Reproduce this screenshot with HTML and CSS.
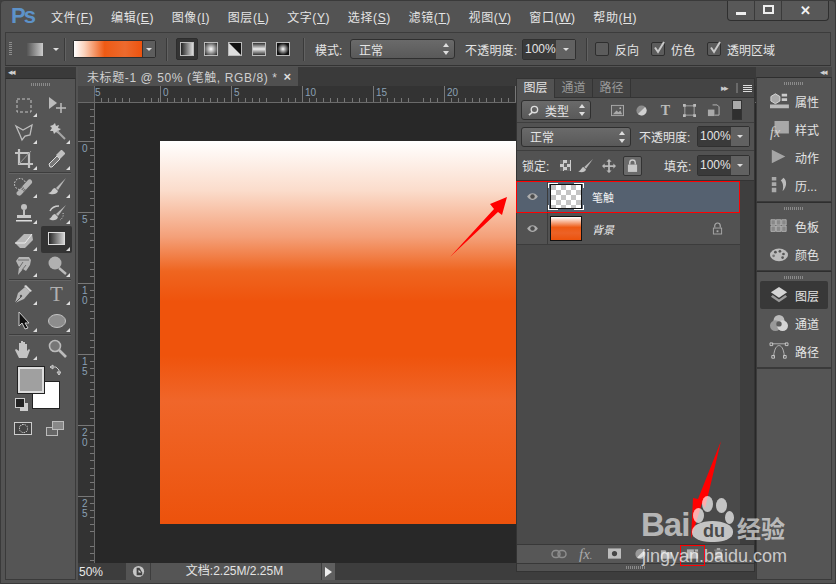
FILE: index.html
```html
<!DOCTYPE html>
<html lang="zh">
<head>
<meta charset="utf-8">
<title>Photoshop</title>
<link rel="stylesheet" href="styles.css">
</head>
<body>
<div class="app">
  <header class="menubar">
    <div class="logo">Ps</div>
    <nav class="menu">
      <span>文件(<u>F</u>)</span><span>编辑(<u>E</u>)</span><span>图像(<u>I</u>)</span><span>图层(<u>L</u>)</span><span>文字(<u>Y</u>)</span><span>选择(<u>S</u>)</span><span>滤镜(<u>T</u>)</span><span>视图(<u>V</u>)</span><span>窗口(<u>W</u>)</span><span>帮助(<u>H</u>)</span>
    </nav>
    <div class="winctl">
      <div class="winbtn w-min"><i class="ic-min"></i></div>
      <div class="winbtn w-max"><i class="ic-max"></i></div>
      <div class="winbtn w-close">✕</div>
    </div>
  </header>

  <section class="options">
    <div class="grip-v"></div>
    <div class="preset"></div>
    <div class="caret preset-caret"></div>
    <div class="sep sep-a"></div>
    <div class="gradbox"><div class="gradfill"></div><div class="graddrop"><div class="caret"></div></div></div>
    <div class="sep sep-b"></div>
    <div class="gtypes">
      <div class="gtype on"><i class="g g-linear"></i></div>
      <div class="gtype"><i class="g g-radial"></i></div>
      <div class="gtype"><i class="g g-angle"></i></div>
      <div class="gtype"><i class="g g-reflect"></i></div>
      <div class="gtype"><i class="g g-diamond"></i></div>
    </div>
    <div class="sep sep-c"></div>
    <span class="lbl mode-l">模式:</span>
    <div class="select mode-s"><span>正常</span><b class="updown"></b></div>
    <span class="lbl op-l">不透明度:</span>
    <div class="combo op-c"><span>100%</span><div class="combo-drop"><div class="caret"></div></div></div>
    <div class="sep sep-d"></div>
    <div class="check"></div><span class="lbl chk-l">反向</span>
    <div class="check on"><svg viewBox="0 0 14 14"><path d="M3 6.5 6 11 12 1" fill="none" stroke="#c8c8c8" stroke-width="2"/></svg></div><span class="lbl chk-l">仿色</span>
    <div class="check on"><svg viewBox="0 0 14 14"><path d="M3 6.5 6 11 12 1" fill="none" stroke="#c8c8c8" stroke-width="2"/></svg></div><span class="lbl chk-l">透明区域</span>
  </section>

  <main class="body">
    <aside class="leftcol">
      <div class="collapse-strip"><span class="dbl">◂◂</span></div>
      <div class="toolbar">
        <div class="grip-h"></div>
        <div class="tools">
          <div class="tool more"><svg viewBox="0 0 20 20"><rect x="3" y="3" width="14" height="13" fill="none" stroke="#c4c4c4" stroke-dasharray="3 2"/></svg></div>
          <div class="tool"><svg viewBox="0 0 20 20"><path d="M2 1v12l8-6z" fill="#bcbcbc"/><path d="M14 7v10M9 12h10" stroke="#bcbcbc" stroke-width="1.5"/></svg></div>
          <div class="tool more"><svg viewBox="0 0 20 20"><path d="M2 4l7 4 9-5-2 10-5 1-3 4-2-5z" fill="none" stroke="#bcbcbc" stroke-width="1.3"/></svg></div>
          <div class="tool more"><svg viewBox="0 0 20 20"><path d="M8 1l1 3 3-1-1 3 3 1-3 2 1 3-3-2-2 2-1-3-3 0 2-3-2-2 3-1z" fill="#c8c8c8"/><path d="M10 9l8 8" stroke="#a8a8a8" stroke-width="2"/></svg></div>
          <div class="tool more"><svg viewBox="0 0 20 20"><path d="M5 0v15h14M1 4h14v15" fill="none" stroke="#c4c4c4" stroke-width="2.2"/><path d="M5 15 17 2" stroke="#999"/></svg></div>
          <div class="tool more"><svg viewBox="0 0 20 20"><path d="M3 18l-1-3 8-8 3 3-8 8z" fill="#777" stroke="#ddd"/><path d="M9 6l5-5 1 0 3 3 0 1-5 5z" fill="#c0c0c0"/></svg></div>
          <div class="divider"></div>
          <div class="tool more"><svg viewBox="0 0 20 20"><circle cx="6" cy="7" r="5.500" fill="none" stroke="#ddd" stroke-dasharray="1.500 1.500"/><path d="M3 15 14 3c2-2 5 1 4 3L7 18c-2 2-6-1-4-3z" fill="#b4b4b4"/><path d="M7 10l4 4" stroke="#666" stroke-width="3" stroke-dasharray="1 1"/></svg></div>
          <div class="tool more"><svg viewBox="0 0 20 20"><path d="M19 1 9 11l2 2z" fill="#b8b8b8"/><path d="M8 11c-3 0-3 5-7 5 3 2 9 2 10-2z" fill="#c8c8c8"/></svg></div>
          <div class="tool more"><svg viewBox="0 0 20 20"><circle cx="10" cy="4" r="3" fill="#c0c0c0"/><path d="M9 7h2v5H9z" fill="#c0c0c0"/><path d="M3 12h14v3H3z" fill="#c8c8c8"/><path d="M2 17h16v1.5H2z" fill="#ddd"/></svg></div>
          <div class="tool more"><svg viewBox="0 0 20 20"><path d="M19 2 9 11l2 2z" fill="#b8b8b8"/><path d="M8 11c-3 0-3 4-6 5 3 2 8 2 9-2z" fill="#c8c8c8"/><path d="M3 8c2-4 5-5 9-5" fill="none" stroke="#ccc" stroke-width="1.5"/><path d="M16 10c1 3-1 6-3 7" fill="none" stroke="#ccc" stroke-dasharray="1 1.5"/></svg></div>
          <div class="tool more"><svg viewBox="0 0 20 20"><path d="M1 13l5 5h5l8-8-1-6-8 0z" fill="#b8b8b8"/><path d="M1 13h10l7-9" fill="none" stroke="#ececec"/></svg></div>
          <div class="tool more on"><svg viewBox="0 0 20 20"><defs><linearGradient id="tg"><stop offset="0" stop-color="#222"/><stop offset="1" stop-color="#d8d8d8"/></linearGradient></defs><rect x="1.5" y="2.500" width="16" height="12" fill="url(#tg)" stroke="#ddd"/></svg></div>
          <div class="tool more"><svg viewBox="0 0 20 20"><path d="M4 19 5 11 2 5 5 1h10l2 3-1 5-4 6-3-2z" fill="#b5b5b5"/><path d="M4 4h11M8 14l4-5M5 12l4-6" stroke="#6d6d6d"/></svg></div>
          <div class="tool more"><svg viewBox="0 0 20 20"><circle cx="8" cy="7" r="6.500" fill="#b0b0b0"/><path d="M12 12l7 6" stroke="#bbb" stroke-width="2.400"/></svg></div>
          <div class="divider"></div>
          <div class="tool more"><svg viewBox="0 0 20 20"><path d="M1 19 4 9l7-6 5 5-6 7z" fill="#b8b8b8"/><path d="M1 19l6-6" stroke="#555"/><path d="M12 1l6 6-2 1-6-6z" fill="#d4d4d4"/><circle cx="7" cy="12" r="1.200" fill="#555"/></svg></div>
          <div class="tool more"><span class="tool-t">T</span></div>
          <div class="tool more"><svg viewBox="0 0 20 20"><path d="M5 1v14l3-3 3 6 3-1-3-5h4z" fill="#111" stroke="#ccc"/></svg></div>
          <div class="tool more"><svg viewBox="0 0 20 20"><ellipse cx="10" cy="10" rx="8.500" ry="6.500" fill="#8d8d8d" stroke="#c4c4c4"/></svg></div>
          <div class="divider"></div>
          <div class="tool more"><svg viewBox="0 0 20 20"><path d="M5 19 1 11l1-1 3 2V4h2v5-7h2v7V3h2v7V5h2v7l2-2 1 1-3 8z" fill="#c4c4c4"/></svg></div>
          <div class="tool"><svg viewBox="0 0 20 20"><circle cx="8" cy="7" r="5.500" fill="#777" stroke="#bbb" stroke-width="1.600"/><path d="M12 11l7 7" stroke="#bbb" stroke-width="2.600"/></svg></div>
        </div>
        <div class="colors">
          <div class="swatch-bg"></div>
          <div class="swatch-fg"></div>
          <svg class="swap" viewBox="0 0 12 12"><path d="M1 3h6l3 3v5M1 3l3-2v4zM10 11l-2-3h4z" fill="none" stroke="#ccc"/></svg>
          <div class="defaults"><i class="d-b"></i><i class="d-f"></i></div>
        </div>
        <div class="modes">
          <div class="mask"><i></i></div>
          <div class="screen"><i class="s1"></i><i class="s2"></i></div>
        </div>
      </div>
    </aside>

    <section class="doc">
      <div class="tabstrip">
        <div class="tab"><span>未标题-1 @ 50% (笔触, RGB/8) *</span><b>×</b></div>
      </div>
      <div class="docbody">
        <div class="hruler">
          <div class="corner"></div>
          <div class="hcell first">5</div><div class="hcell">0</div><div class="hcell">5</div><div class="hcell">10</div><div class="hcell">15</div><div class="hcell">20</div><div class="hcell"></div><div class="hcell"></div>
        </div>
        <div class="docmain">
          <div class="vruler">
            <div class="vcell first"></div><div class="vcell">0</div><div class="vcell">5</div><div class="vcell">1<br>0</div><div class="vcell">1<br>5</div><div class="vcell">2<br>0</div><div class="vcell">2<br>5</div>
          </div>
          <div class="workspace"><div class="artboard"></div></div>
        </div>
        <div class="status">
          <span class="zoomv">50%</span>
          <div class="st-btn"><svg viewBox="0 0 14 14"><circle cx="7" cy="7" r="6" fill="#c8c8c8"/><path d="M5 3h3l3 5v3H5z" fill="#444"/><path d="M7 5l3 3H7z" fill="#ddd"/></svg></div>
          <div class="st-info">文档:2.25M/2.25M</div>
          <div class="st-arrow"><i></i></div>
        </div>
      </div>
    </section>

    <aside class="dock">
      <div class="collapse-strip right"><span class="dbl">◂◂</span></div>
      <div class="dockgroup">
        <div class="grip-h"></div>
        <div class="dockrow"><svg viewBox="0 0 22 20"><path d="M2 5l5-3 5 3v5l-5 3-5-3z" fill="#aaa" stroke="#ddd"/><path d="M14 2h6v3h-6zM14 7h6v3h-6z" fill="#ccc"/><path d="M1 14h21v4H1z" fill="#bbb"/></svg><span>属性</span></div>
        <div class="dockrow"><svg viewBox="0 0 22 20"><path d="M6 1h16v14H6z" fill="#a8a8a8"/></svg><em class="fx">fx</em><span>样式</span></div>
        <div class="dockrow"><svg viewBox="0 0 22 20"><path d="M3 2v15l15-7.500z" fill="#a5a5a5"/></svg><span>动作</span></div>
        <div class="dockrow"><svg viewBox="0 0 22 20"><path d="M3 1h5v4H3zM3 7h5v4H3zM3 13h5v5H3z" fill="#aaa"/><path d="M16 2c4 3 4 10-1 15 1-5 1-9-2-12z" fill="#bbb"/></svg><span>历...</span></div>
      </div>
      <div class="dockgroup">
        <div class="grip-h"></div>
        <div class="dockrow"><svg viewBox="0 0 22 20"><path d="M2 3h5v6H2zM8 3h5v6H8zM14 3h5v6h-5zM2 10h5v6H2zM8 10h5v6H8zM14 10h5v6h-5z" fill="#888" stroke="#ccc" stroke-width=".7"/></svg><span>色板</span></div>
        <div class="dockrow"><svg viewBox="0 0 22 20"><ellipse cx="11" cy="11" rx="10" ry="7" fill="#bcbcbc"/><circle cx="7" cy="8" r="1.500" fill="#555"/><circle cx="12" cy="7" r="1.500" fill="#555"/><circle cx="16" cy="10" r="1.500" fill="#555"/><circle cx="15" cy="14" r="1.500" fill="#555"/><circle cx="5" cy="12" r="1.500" fill="#777"/></svg><span>颜色</span></div>
      </div>
      <div class="dockgroup">
        <div class="grip-h"></div>
        <div class="dockrow active"><svg viewBox="0 0 22 20"><path d="M11 1l9 6-9 6-9-6z" fill="#d4d4d4"/><path d="M4 10l-2 2 9 6 9-6-2-2-7 5z" fill="#9a9a9a"/></svg><span>图层</span></div>
        <div class="dockrow"><svg viewBox="0 0 22 20"><circle cx="11" cy="7" r="6" fill="#bbb"/><circle cx="7" cy="13" r="6" fill="#999"/><circle cx="15" cy="13" r="6" fill="#d4d4d4"/><circle cx="11" cy="11" r="3" fill="#5c5c5c"/></svg><span>通道</span></div>
        <div class="dockrow"><svg viewBox="0 0 22 20"><path d="M5 16C6 6 9 4 11 4s5 2 6 12M3 2h16" fill="none" stroke="#bbb"/><path d="M1 1h3v3H1zM18 1h3v3h-3zM3 15h3v3H3zM16 15h3v3h-3z" fill="none" stroke="#ccc"/></svg><span>路径</span></div>
      </div>
      <div class="dockfill"></div>
    </aside>
  </main>

  <section class="layers">
    <div class="lp-tabs">
      <div class="lp-tab on">图层</div><div class="lp-tab">通道</div><div class="lp-tab">路径</div>
      <div class="lp-right"><span class="dbl small">▸▸</span><i class="lp-bar"></i><i class="lp-menu"></i></div>
    </div>
    <div class="lp-filter">
      <div class="select filter-s"><svg viewBox="0 0 12 12"><circle cx="7" cy="5" r="3.500" fill="none" stroke="#ddd" stroke-width="1.500"/><path d="M4.500 8 1 11" stroke="#ddd" stroke-width="1.800"/></svg><span>类型</span><b class="updown"></b></div>
      <div class="f-icons">
        <svg viewBox="0 0 14 14"><rect x=".5" y="1.500" width="13" height="11" fill="#5a5a5a" stroke="#aaa"/><path d="M2 11l4-4 2 2 2-2 2 4z" fill="#aaa"/><circle cx="10" cy="4.500" r="1" fill="#bbb"/></svg>
        <svg viewBox="0 0 14 14"><circle cx="7" cy="7" r="5.500" fill="#8c8c8c"/><path d="M10.900 3.100A5.500 5.500 0 0 1 3.100 10.900z" fill="#d0d0d0"/></svg>
        <span class="f-t">T</span>
        <svg viewBox="0 0 14 14"><path d="M2 2h10v10H2z" fill="none" stroke="#aaa"/><path d="M0 0h3v3H0zM11 0h3v3h-3zM0 11h3v3H0zM11 11h3v3h-3z" fill="#bbb"/></svg>
        <svg viewBox="0 0 14 14"><path d="M6 1h5l2 2v9H8" fill="none" stroke="#bbb"/><rect x="1" y="6" width="7" height="7" fill="#aaa"/></svg>
      </div>
      <div class="f-toggle"><i></i></div>
    </div>
    <div class="lp-blend">
      <div class="select blend-s"><span>正常</span><b class="updown"></b></div>
      <span class="lbl lp-op">不透明度:</span>
      <div class="combo lp-c"><span>100%</span><div class="combo-drop"><div class="caret"></div></div></div>
    </div>
    <div class="lp-lock">
      <span class="lbl lock-l">锁定:</span>
      <i class="lk-check"></i>
      <svg class="lk" viewBox="0 0 18 16"><path d="M17 0 7 9l2 2z" fill="#b8b8b8"/><path d="M6 9c-2 0-2 4-6 5 4 2 8 1 9-2z" fill="#c4c4c4"/></svg>
      <svg class="lk" viewBox="0 0 16 16"><path d="M8 0l3 3H9v4h4V5l3 3-3 3V9H9v4h2l-3 3-3-3h2V9H3v2L0 8l3-3v2h4V3H5z" fill="#b8b8b8"/></svg>
      <div class="lk-on"><svg viewBox="0 0 12 14"><path d="M3 6V4a3 3 0 0 1 6 0v2" fill="none" stroke="#ccc" stroke-width="1.500"/><rect x="1" y="6" width="10" height="8" fill="#c8c8c8"/></svg></div>
      <span class="lbl fill-l">填充:</span>
      <div class="combo lp-c"><span>100%</span><div class="combo-drop"><div class="caret"></div></div></div>
    </div>
    <div class="lp-mid">
      <div class="lp-list">
        <div class="layer sel">
          <div class="eye"><svg viewBox="0 0 14 10"><path d="M1 5c3-5 9-5 12 0-3 5-9 5-12 0z" fill="#adadad"/><circle cx="7" cy="5" r="2.500" fill="#4c4c4c"/></svg></div>
          <div class="thumbwrap"><div class="thumb check-bg"></div></div>
          <span class="lname">笔触</span>
        </div>
        <div class="layer">
          <div class="eye"><svg viewBox="0 0 14 10"><path d="M1 5c3-5 9-5 12 0-3 5-9 5-12 0z" fill="#adadad"/><circle cx="7" cy="5" r="2.500" fill="#4c4c4c"/></svg></div>
          <div class="thumbwrap"><div class="thumb grad-bg"></div></div>
          <span class="lname it">背景</span>
          <svg class="llock" viewBox="0 0 12 14"><path d="M3 6V4a3 3 0 0 1 6 0v2" fill="none" stroke="#aaa" stroke-width="1.300"/><rect x="1.500" y="6.500" width="9" height="6.500" fill="none" stroke="#aaa"/><rect x="5" y="9" width="2" height="2" fill="#aaa"/></svg>
        </div>
      </div>
      <div class="lp-scroll"></div>
    </div>
    <div class="lp-foot">
      <svg class="fi-link" viewBox="0 0 16 10"><rect x="1" y="1.500" width="8" height="7" rx="3.500" fill="none" stroke="#8d8d8d" stroke-width="1.500"/><rect x="7" y="1.500" width="8" height="7" rx="3.500" fill="none" stroke="#8d8d8d" stroke-width="1.500"/></svg>
      <em class="fi-fx">fx<small>.</small></em>
      <svg class="fi" viewBox="0 0 14 12"><rect width="14" height="11" fill="#bdbdbd"/><circle cx="7" cy="5.500" r="2.800" fill="#444"/></svg>
      <svg class="fi" viewBox="0 0 14 14"><circle cx="7" cy="7" r="6" fill="#999"/><path d="M11 3A6 6 0 0 1 3 11z" fill="#ddd"/></svg>
      <svg class="fi" viewBox="0 0 14 12"><path d="M1 2h5l1 2h6v7H1z" fill="#b0b0b0"/></svg>
      <svg class="fi" viewBox="0 0 14 12"><path d="M1 1h12v10H1z" fill="#b0b0b0"/><path d="M9 1v3h4" fill="none" stroke="#555"/></svg>
      <svg class="fi" viewBox="0 0 14 14"><path d="M3 4h8v9H3zM2 2h10v1H2zM5 0h4v2H5z" fill="#a5a5a5"/></svg>
    </div>
    <div class="lp-resize"><div class="grip-h"></div></div>
  </section>

  <svg class="annot" viewBox="0 0 836 584">
    <path d="M450 257 494 209 490 204 507 197 502 215 498 212z" fill="#ff0000"/>
    <path d="M721 441 705 508 702 503 691 539 693 498 698 499z" fill="#ff0000"/>
  </svg>
  <div class="redbox rb-layer"></div>
  <div class="redbox rb-foot"></div>

  <div class="watermark">
    <div class="wm-top">
      <span class="wm-bai">Bai</span>
      <div class="wm-paw">
        <i class="t1"></i><i class="t2"></i><i class="t3"></i><i class="t4"></i><i class="palm"></i>
        <b>du</b>
      </div>
      <span class="wm-jy">经验</span>
    </div>
    <div class="wm-url">jingyan.baidu.com</div>
  </div>
</div>
</body>
</html>
```

FILE: styles.css
```css
* { box-sizing: border-box; }
html, body { margin: 0; padding: 0; }
body { width: 836px; height: 584px; overflow: hidden; background: #3e3e3e; font-family: "Liberation Sans", "Noto Sans CJK SC", sans-serif; font-size: 12px; color: #e4e4e4; }
i, b, em { display: block; font-style: normal; }
svg { display: block; }
.app { position: relative; width: 836px; height: 584px; display: flex; flex-direction: column; background: #535353; border: 1px solid #3a3a3a; border-radius: 4px 4px 0 0; overflow: hidden; }

/* menu */
.menubar { height: 31px; flex: none; display: flex; align-items: center; padding-left: 10px; position: relative; }
.logo { width: 40px; color: #5d92c9; font-size: 22px; font-weight: bold; line-height: 30px; margin-top: -2px; letter-spacing: -2px; }
.menu { display: flex; gap: 17.700px; font-size: 12px; letter-spacing: .6px; }
.menu span { white-space: nowrap; }
.winctl { position: absolute; top: -1px; right: 6px; height: 21px; width: 102px; display: flex; border: 1px solid #2f2f2f; border-top: 0; border-radius: 0 0 4px 4px; background: #585858; }
.winbtn { height: 100%; display: flex; align-items: center; justify-content: center; border-right: 1px solid #3a3a3a; }
.w-min { width: 27px; } .w-max { width: 27px; }
.w-close { flex: 1; border: 0; color: #f2f2f2; font-size: 13px; font-weight: bold; }
.ic-min { width: 10px; height: 3px; background: #eee; margin-top: 7px; }
.ic-max { width: 11px; height: 9px; border: 2px solid #eee; margin-top: -2px; }

/* options */
.options { height: 34px; flex: none; margin: 0 4px; display: flex; align-items: center; border: 1px solid #3c3c3c; border-bottom-color: #333; background: #515151; position: relative; }
.grip-v { width: 3px; height: 14px; margin-left: 3px; background: repeating-linear-gradient(#8d8d8d 0 1px, transparent 1px 2px); }
.preset { width: 16px; height: 13px; margin-left: 15px; background: linear-gradient(90deg, #555, #ccc); }
.caret { width: 0; height: 0; border: 3px solid transparent; border-top: 3px solid #ddd; border-bottom: 0; border-left-width: 3px; }
.preset-caret { margin-left: 10px; }
.sep { width: 1px; height: 23px; background: #3a3a3a; box-shadow: 1px 0 #626262; }
.sep-a { margin-left: 5px; }
.gradbox { width: 83px; height: 18px; margin-left: 8px; display: flex; border: 1px solid #2e2e2e; border-radius: 2px; }
.gradfill { width: 68px; background: linear-gradient(90deg, #fff 0%, #fbd3bd 15%, #ee5a14 45%, #ec6a2e 75%, #ee530e 100%); }
.graddrop { flex: 1; background: #5d5d5d; display: flex; align-items: center; justify-content: center; border-left: 1px solid #333; }
.sep-b { margin-left: 10px; }
.gtypes { display: flex; margin-left: 9px; }
.gtype { width: 22px; height: 22px; margin-right: 2px; display: flex; align-items: center; justify-content: center; border-radius: 2px; }
.gtype.on { background: #343434; border: 1px solid #2d2d2d; }
.g { width: 12px; height: 12px; box-shadow: 0 0 0 1px #bbb; }
.g-linear { background: linear-gradient(90deg, #222, #ddd); }
.g-radial { background: radial-gradient(circle, #fff 0, #222 100%); }
.g-angle { background: linear-gradient(45deg, #ddd 49%, #111 51%); }
.g-reflect { background: linear-gradient(#333, #eee 50%, #333); }
.g-diamond { background: radial-gradient(circle, #fff 0, #111 70%); }
.sep-c { margin-left: 7px; }
.lbl { white-space: nowrap; }
.mode-l { margin-left: 11px; width: 35px; }
.select { height: 20px; display: flex; align-items: center; padding-left: 8px; border: 1px solid #2f2f2f; border-radius: 3px; background: linear-gradient(#6a6a6a, #595959); position: relative; }
.updown { position: absolute; right: 5px; top: 4px; width: 6px; height: 10px; }
.updown::before, .updown::after { content: ""; position: absolute; left: 0; border: 3px solid transparent; }
.updown::before { top: -1px; border-top: 0; border-bottom: 4px solid #ddd; }
.updown::after { bottom: -1px; border-bottom: 0; border-top: 4px solid #ddd; }
.mode-s { width: 105px; }
.op-l { margin-left: 10px; width: 57px; letter-spacing: .2px; }
.combo { display: flex; height: 21px; width: 54px; border: 1px solid #303030; border-radius: 2px; }
.combo span { width: 33px; background: #3a3a3a; line-height: 19px; padding-left: 2px; }
.combo-drop { flex: 1; background: #616161; display: flex; align-items: center; justify-content: center; }
.sep-d { margin-left: 10px; }
.check { width: 14px; height: 14px; border: 1px solid #2e2e2e; border-radius: 2px; background: #5c5c5c; margin-left: 8px; }
.check.on svg { width: 14px; height: 14px; margin: -2px 0 0 0; }
.check.on { margin-left: 12px; }
.chk-l { margin-left: 6px; }

/* body grid */
.body { flex: 1; min-height: 0; display: flex; padding: 1px 3px 3px 4px; }
.leftcol { width: 71px; flex: none; display: flex; flex-direction: column; }
.collapse-strip { height: 11px; flex: none; background: #3a3a3a; color: #cfcfcf; font-size: 9px; line-height: 11px; padding-left: 3px; letter-spacing: -2px; }
.collapse-strip.right { height: 10px; text-align: right; padding-right: 6px; background: #474747; }
.dbl { display: inline-block; }
.toolbar { flex: 1; background: #555; border: 1px solid #3a3a3a; border-top-color: #2e2e2e; display: flex; flex-direction: column; }
.grip-h { width: 20px; height: 3px; margin: 4px auto 0; flex: none; background: repeating-linear-gradient(90deg, #8a8a8a 0 1px, transparent 1px 2px); }
.tools { display: grid; grid-template-columns: 33px 33px; margin: 7px 0 0 1px; }
.tool { position: relative; display: flex; align-items: center; justify-content: center; width: 31px; height: 26.300px; justify-self: center; }
.tool svg { width: 20px; height: 20px; }
.tool.more::after { content: ""; position: absolute; right: 2px; bottom: 2px; border: 2px solid transparent; border-right-color: #ddd; border-bottom-color: #ddd; }
.tool.on { background: #343434; border-radius: 2px; }
.tool-t { color: #b0b0b0; font: 21px "Liberation Serif", serif; }
.divider { grid-column: 1 / 3; height: 1px; background: #3d3d3d; box-shadow: 0 1px #646464; margin: 0 0 1px; width: 62px; justify-self: center; }
.colors { position: relative; height: 54px; margin-top: 5px; flex: none; }
.swatch-fg { position: absolute; left: 12px; top: 0; width: 26px; height: 26px; background: #a0a0a0; border: 2px solid #ddd; box-shadow: 0 0 0 1px #222; }
.swatch-bg { position: absolute; left: 27px; top: 15px; width: 26px; height: 26px; background: #fff; box-shadow: 0 0 0 1px #222; }
.swap { position: absolute; left: 43px; top: -3px; width: 12px; height: 12px; }
.defaults { position: absolute; left: 10px; top: 32px; width: 12px; height: 12px; }
.d-f { position: absolute; right: 0; bottom: 0; width: 8px; height: 8px; background: #ccc; }
.d-b { position: absolute; left: 0; top: 0; width: 8px; height: 8px; background: #222; box-shadow: 0 0 0 1px #ccc; z-index: 1; }
.modes { display: flex; justify-content: space-between; padding: 0 11px 0 8px; align-items: center; }
.mask { width: 18px; height: 13px; border: 1px solid #ccc; background: #444; display: flex; align-items: center; justify-content: center; }
.mask i { width: 9px; height: 9px; border-radius: 50%; border: 1px dotted #eee; }
.screen { width: 18px; height: 15px; position: relative; }
.s1, .s2 { position: absolute; width: 12px; height: 9px; border: 1px solid #bbb; }
.s1 { left: 0; bottom: 0; background: #666; }
.s2 { right: 0; top: 0; background: #888; }

/* doc */
.doc { width: 678px; flex: none; margin-left: 2px; display: flex; flex-direction: column; min-height: 0; }
.tabstrip { height: 19px; flex: none; background: #3a3a3a; display: flex; }
.tab { width: 220px; display: flex; align-items: center; padding-left: 9px; background: #505050; color: #cfcfcf; gap: 6px; font-size: 12px; white-space: nowrap; letter-spacing: .6px; }
.tab b { font-size: 13px; color: #ddd; font-weight: bold; }
.docbody { flex: 1; min-height: 0; display: flex; flex-direction: column; background: #282828; }
.hruler { height: 17px; flex: none; display: flex; background: #333; overflow: hidden; border-bottom: 1px solid #6a6a6a; }
.corner { width: 17px; flex: none; background: #444; border-right: 1px solid #6a6a6a; }
.hcell { width: 71px; flex: none; padding: 1px 0 0 2px; font-size: 10px; line-height: 11px; color: #8aa0b4; border-left: 1px solid #777; background: repeating-linear-gradient(90deg, transparent 0 6px, #777 6px 7px, transparent 7px 7.100px) bottom / 100% 4px no-repeat; }
.hcell.first { width: 65px; border-left: 0; padding-left: 0; }
.docmain { flex: 1; min-height: 0; display: flex; }
.vruler { width: 17px; flex: none; background: #333; border-right: 1px solid #6a6a6a; overflow: hidden; }
.vcell { height: 71px; font-size: 10px; line-height: 10px; padding: 2px 0 0 4px; color: #8aa0b4; border-top: 1px solid #777; background: repeating-linear-gradient(transparent 0 6px, #777 6px 7px, transparent 7px 7.100px) right / 4px 100% no-repeat; }
.vcell.first { height: 38px; border-top: 0; }
.workspace { flex: 1; min-width: 0; overflow: hidden; padding: 38px 0 0 65px; background: #282828; }
.artboard { width: 383px; height: 383px; background: linear-gradient(#fff 0%, #fbdccb 13%, #f4a079 25%, #ef6520 34%, #ef530c 42%, #ef530c 56%, #f0662a 68%, #ee5c1a 85%, #ec520c 100%); }
.status { height: 17px; flex: none; display: flex; align-items: center; background: #3d3d3d; }
.zoomv { width: 48px; padding-left: 1px; color: #e8e8e8; }
.st-btn { width: 24px; height: 100%; background: #545454; display: flex; align-items: center; justify-content: center; }
.st-btn svg { width: 13px; height: 13px; }
.st-info { width: 170px; height: 100%; margin-left: 1px; background: #555; text-align: center; line-height: 17px; padding-right: 3px; }
.st-arrow { width: 13px; height: 100%; margin-left: 1px; background: #5f5f5f; display: flex; align-items: center; justify-content: center; }
.st-arrow i { border: 5px solid transparent; border-left: 7px solid #eee; border-right: 0; }

/* dock */
.dock { width: 76px; flex: none; display: flex; flex-direction: column; }
.dockgroup { background: #555; border: 1px solid #3a3a3a; border-top-color: #2e2e2e; padding-bottom: 2px; }
.dockgroup .grip-h { margin-top: 4px; margin-bottom: 2px; }
.dockrow { height: 28px; display: flex; align-items: center; gap: 6px; padding-left: 9px; position: relative; margin: 0 3px; border-radius: 2px; }
.dockrow svg { width: 20px; height: 18px; flex: none; }
.dockrow span { font-size: 12px; white-space: nowrap; }
.dockrow.active { background: #383838; }
.fx { position: absolute; left: 10px; top: 10px; font: italic 14px "Liberation Serif", serif; color: #d0d0d0; }
.dockfill { flex: 1; background: #555; border: 1px solid #3a3a3a; }

/* layers */
.layers { position: absolute; left: 515px; top: 77px; width: 239px; height: 494px; display: flex; flex-direction: column; background: #525252; border: 1px solid #333; }
.lp-tabs { height: 19px; flex: none; display: flex; background: #444; border-bottom: 1px solid #343434; }
.lp-tab { width: 38px; text-align: center; line-height: 18px; color: #9a9a9a; border-right: 1px solid #343434; }
.lp-tab.on { background: #525252; color: #e4e4e4; height: 19px; }
.lp-right { margin-left: auto; display: flex; align-items: center; gap: 5px; padding-right: 2px; }
.dbl.small { font-size: 9px; letter-spacing: -2px; color: #ccc; margin-right: 4px; }
.lp-bar { width: 2px; height: 10px; background: #6a6a6a; }
.lp-menu { width: 9px; height: 7px; background: repeating-linear-gradient(#ddd 0 1px, transparent 1px 2px); }
.lp-filter { height: 25px; flex: none; display: flex; align-items: center; padding-left: 4px; border-bottom: 1px solid #3e3e3e; }
.filter-s { width: 70px; padding-left: 6px; gap: 6px; }
.filter-s svg { width: 11px; height: 11px; }
.f-icons { display: flex; align-items: center; gap: 11px; margin-left: 20px; width: 116px; }
.f-icons svg { width: 13px; height: 13px; flex: none; }
.f-t { font: bold 14px "Liberation Serif", serif; color: #bbb; width: 13px; text-align: center; line-height: 13px; }
.f-toggle { width: 10px; height: 20px; margin-left: 5px; background: #2f2f2f; border: 1px solid #333; }
.f-toggle i { height: 8px; background: #aaa; }
.lp-blend { height: 28px; flex: none; display: flex; align-items: center; padding-left: 4px; border-bottom: 1px solid #3e3e3e; }
.blend-s { width: 110px; }
.lp-op { margin-left: 8px; width: 58px; }
.lp-c { width: 53px; }
.lp-c span { width: 33px; }
.lp-lock { height: 30px; flex: none; display: flex; align-items: center; padding-left: 5px; border-bottom: 1px solid #343434; }
.lock-l { width: 38px; }
.lk-check { width: 11px; height: 11px; flex: none; background: conic-gradient(#ccc 25%, #666 0 50%, #ccc 0 75%, #666 0) 0 0 / 7px 7px; }
.lk { width: 16px; height: 14px; margin-left: 7px; }
.lk-on { width: 19px; height: 20px; margin-left: 6px; background: #6a6a6a; border: 1px solid #333; border-radius: 2px; display: flex; align-items: center; justify-content: center; }
.lk-on svg { width: 11px; height: 13px; }
.fill-l { margin-left: 22px; width: 33px; }
.lp-mid { flex: 1; min-height: 0; display: flex; }
.lp-list { width: 223px; flex: none; background: #4a4a4a; }
.lp-scroll { flex: 1; background: #3e3e3e; }
.layer { height: 32px; display: flex; align-items: center; background: #525252; border-bottom: 1px solid #3c3c3c; position: relative; }
.layer.sel { background: #556170; }
.eye { width: 31px; height: 100%; display: flex; align-items: center; justify-content: center; border-right: 1px solid #3c3c3c; }
.eye svg { width: 13px; height: 9px; }
.thumbwrap { width: 36px; height: 100%; display: flex; align-items: center; justify-content: center; }
.sel .thumbwrap { background:
  linear-gradient(#fff, #fff) 0 2px / 10px 1px no-repeat,
  linear-gradient(#fff, #fff) 0 2px / 1px 5px no-repeat,
  linear-gradient(#fff, #fff) 100% 2px / 10px 1px no-repeat,
  linear-gradient(#fff, #fff) 100% 2px / 1px 5px no-repeat,
  linear-gradient(#fff, #fff) 0 calc(100% - 2px) / 10px 1px no-repeat,
  linear-gradient(#fff, #fff) 0 calc(100% - 2px) / 1px 5px no-repeat,
  linear-gradient(#fff, #fff) 100% calc(100% - 2px) / 10px 1px no-repeat,
  linear-gradient(#fff, #fff) 100% calc(100% - 2px) / 1px 5px no-repeat; }
.thumb { width: 32px; height: 25px; border: 1px solid #111; }
.check-bg { background: conic-gradient(#fff 25%, #c4c4c4 0 50%, #fff 0 75%, #c4c4c4 0) 0 0 / 10px 10px; }
.grad-bg { background: linear-gradient(#fff 0%, #ee5a14 45%, #ec6226 70%, #ec520c 100%); }
.lname { margin-left: 8px; color: #f0f0f0; font-size: 11px; }
.lname.it { font-style: italic; }
.llock { position: absolute; right: 17px; top: 9px; width: 11px; height: 13px; }
.lp-foot { height: 19px; flex: none; display: flex; align-items: center; padding-left: 34px; background: #575757; border-top: 1px solid #383838; }
.fi-link { width: 16px; height: 10px; }
.fi-fx { font: italic 15px "Liberation Serif", serif; color: #aaa; margin-left: 12px; width: 16px; }
.fi-fx small { font-size: 10px; }
.fi { width: 13px; height: 12px; margin-left: 13px; }
.lp-resize { height: 8px; flex: none; background: #525252; border-top: 1px solid #383838; }
.lp-resize .grip-h { margin-top: 2px; width: 20px; }

/* annotations */
.annot { position: absolute; left: -1px; top: -1px; width: 836px; height: 584px; pointer-events: none; }
.redbox { position: absolute; border: 1px solid #f00; }
.rb-layer { left: 515px; top: 180px; width: 224px; height: 32px; }
.rb-foot { left: 679px; top: 544px; width: 25px; height: 21px; }

/* watermark */
.watermark { position: absolute; left: 640px; top: 495px; width: 200px; color: rgba(255,255,255,.62); }
.wm-top { display: flex; align-items: flex-end; height: 48px; }
.wm-bai { width: 51px; font: bold 33px/32px "Liberation Sans", sans-serif; letter-spacing: -1px; margin-bottom: 3px; }
.wm-paw { position: relative; width: 42px; height: 48px; flex: none; }
.wm-paw i { position: absolute; background: rgba(255,255,255,.68); border-radius: 50%; }
.t1 { left: 1px; top: 12px; width: 11px; height: 15px; }
.t2 { left: 10px; top: 0; width: 11px; height: 16px; }
.t3 { left: 24px; top: 2px; width: 11px; height: 15px; }
.t4 { left: 33px; top: 15px; width: 9px; height: 13px; }
.wm-paw .palm { left: 0; top: 25px; width: 41px; height: 21px; border-radius: 50% 50% 45% 45%; }
.wm-paw b { position: absolute; left: 11px; top: 26px; font: bold 18px/18px "Liberation Sans", sans-serif; color: #4a4a4a; }
.wm-jy { font: bold 24px/30px "Noto Sans CJK SC", sans-serif; margin-left: 3px; white-space: nowrap; margin-bottom: 1px; }
.wm-url { font: 18px/18px "Liberation Sans", sans-serif; letter-spacing: 0; margin-top: 3px; margin-left: 1px; white-space: nowrap; color: rgba(255,255,255,.7); }
```
